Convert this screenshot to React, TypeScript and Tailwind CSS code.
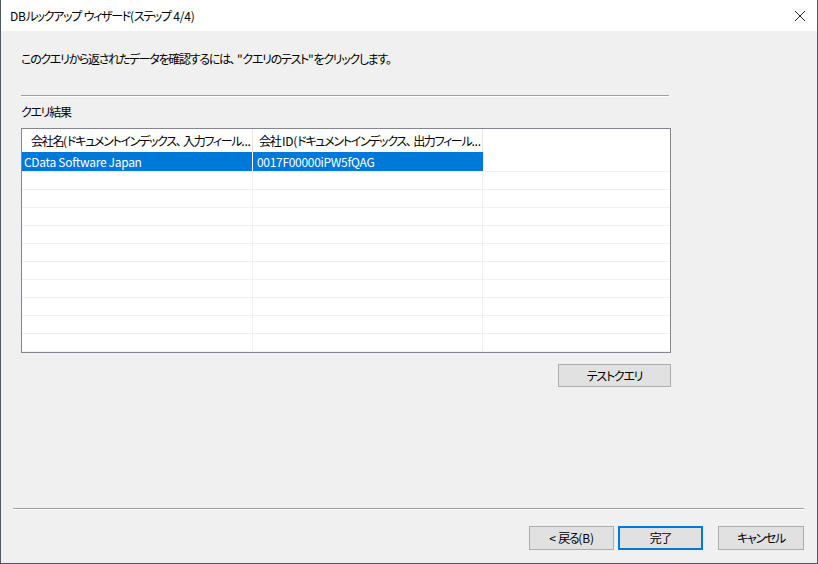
const font = { fontFamily: '"Noto Sans CJK JP", "Noto Sans", sans-serif' }

const rows = 10

// Latin runs keep near-normal spacing; CJK runs are squeezed to match the narrow UI font
function L({ children }: { children: React.ReactNode }) {
  return <span className="tracking-[-0.2px]">{children}</span>
}

export default function App() {
  return (
    <div
      className="w-[818px] h-[564px] bg-[#f0f0f0] border-l border-r border-b border-[#505868] flex flex-col text-[12px] text-black overflow-hidden [font-feature-settings:'palt'] tracking-[-1.3px]"
      style={font}
    >
      {/* Title bar */}
      <div className="h-[31px] bg-white flex items-center justify-between pl-[9px] pr-[8px] shrink-0">
        <span className="text-[12px] leading-none">
          <L>DB</L>ルックアップ<L> </L>ウィザード<L>(</L>ステップ<L> 4/4)</L>
        </span>
        <svg width="12" height="12" viewBox="0 0 12 12" className="mr-[3px]">
          <path d="M1 1L11 11M11 1L1 11" stroke="#222" strokeWidth="1" />
        </svg>
      </div>

      {/* Body */}
      <div className="flex-1 flex flex-col pl-[20px]">
        <p className="mt-[19px] h-[17px] leading-[17px]">
          このクエリから返されたデータを確認するには、<L> "</L>クエリのテスト<L>"</L>をクリックします。
        </p>
        <div className="mt-[28px] w-[648px] h-[2px] border-t border-[#a0a0a0] border-b border-b-white" />
        <p className="mt-[6px] h-[17px] leading-[17px]">クエリ結果</p>

        {/* Grid */}
        <div className="mt-[8px] w-[650px] h-[225px] bg-white border border-[#828790] overflow-hidden">
          <div className="flex h-[23px]">
            <div className="w-[231px] border-r border-[#e5e5e5] pl-[9px] pt-[3px] leading-[18px] whitespace-nowrap overflow-hidden">
              会社名<L>(</L>ドキュメントインデックス、<L> </L>入力フィール<L>...</L>
            </div>
            <div className="w-[230px] border-r border-[#e5e5e5] pl-[6px] pt-[3px] leading-[18px] whitespace-nowrap overflow-hidden">
              会社<span className="ml-[1.5px] tracking-[-0.2px]">ID(</span>ドキュメントインデックス、<L> </L>出力フィール<L>...</L>
            </div>
            <div className="flex-1" />
          </div>
          <div className="flex h-[20px] border-b border-[#f0f0f0] tracking-[-0.3px]">
            <div className="w-[231px] bg-[#0078d7] text-white pl-[2px] flex items-center border-r border-white">
              CData Software Japan
            </div>
            <div className="w-[230px] bg-[#0078d7] text-white pl-[4px] flex items-center">
              0017F00000iPW5fQAG
            </div>
            <div className="flex-1 border-l border-[#f0f0f0]" />
          </div>
          {Array.from({ length: rows }).map((_, i) => (
            <div key={i} className="flex h-[18px] border-b border-[#f0f0f0]">
              <div className="w-[231px] border-r border-[#f0f0f0]" />
              <div className="w-[230px] border-r border-[#f0f0f0]" />
              <div className="flex-1" />
            </div>
          ))}
        </div>

        <div className="w-[650px] flex justify-end mt-[11px]">
          <button className="w-[113px] h-[23px] bg-[#e1e1e1] border border-[#adadad] text-[12px]">
            テストクエリ
          </button>
        </div>

        <div className="flex-1" />
        <div className="-ml-[8px] w-[791px] h-[2px] border-t border-[#a0a0a0] border-b border-b-white" />
        <div className="flex justify-end gap-[4px] mt-[16px] mb-[13px] pr-[13px]">
          <button className="w-[85px] h-[24px] bg-[#e1e1e1] border border-[#adadad]">
            <L>&lt; </L>戻る<L>(B)</L>
          </button>
          <button className="w-[85px] h-[24px] bg-[#e1e1e1] border-2 border-[#0078d7]">完了</button>
          <button className="ml-[11px] w-[86px] h-[24px] bg-[#e1e1e1] border border-[#adadad]">キャンセル</button>
        </div>
      </div>
    </div>
  )
}
